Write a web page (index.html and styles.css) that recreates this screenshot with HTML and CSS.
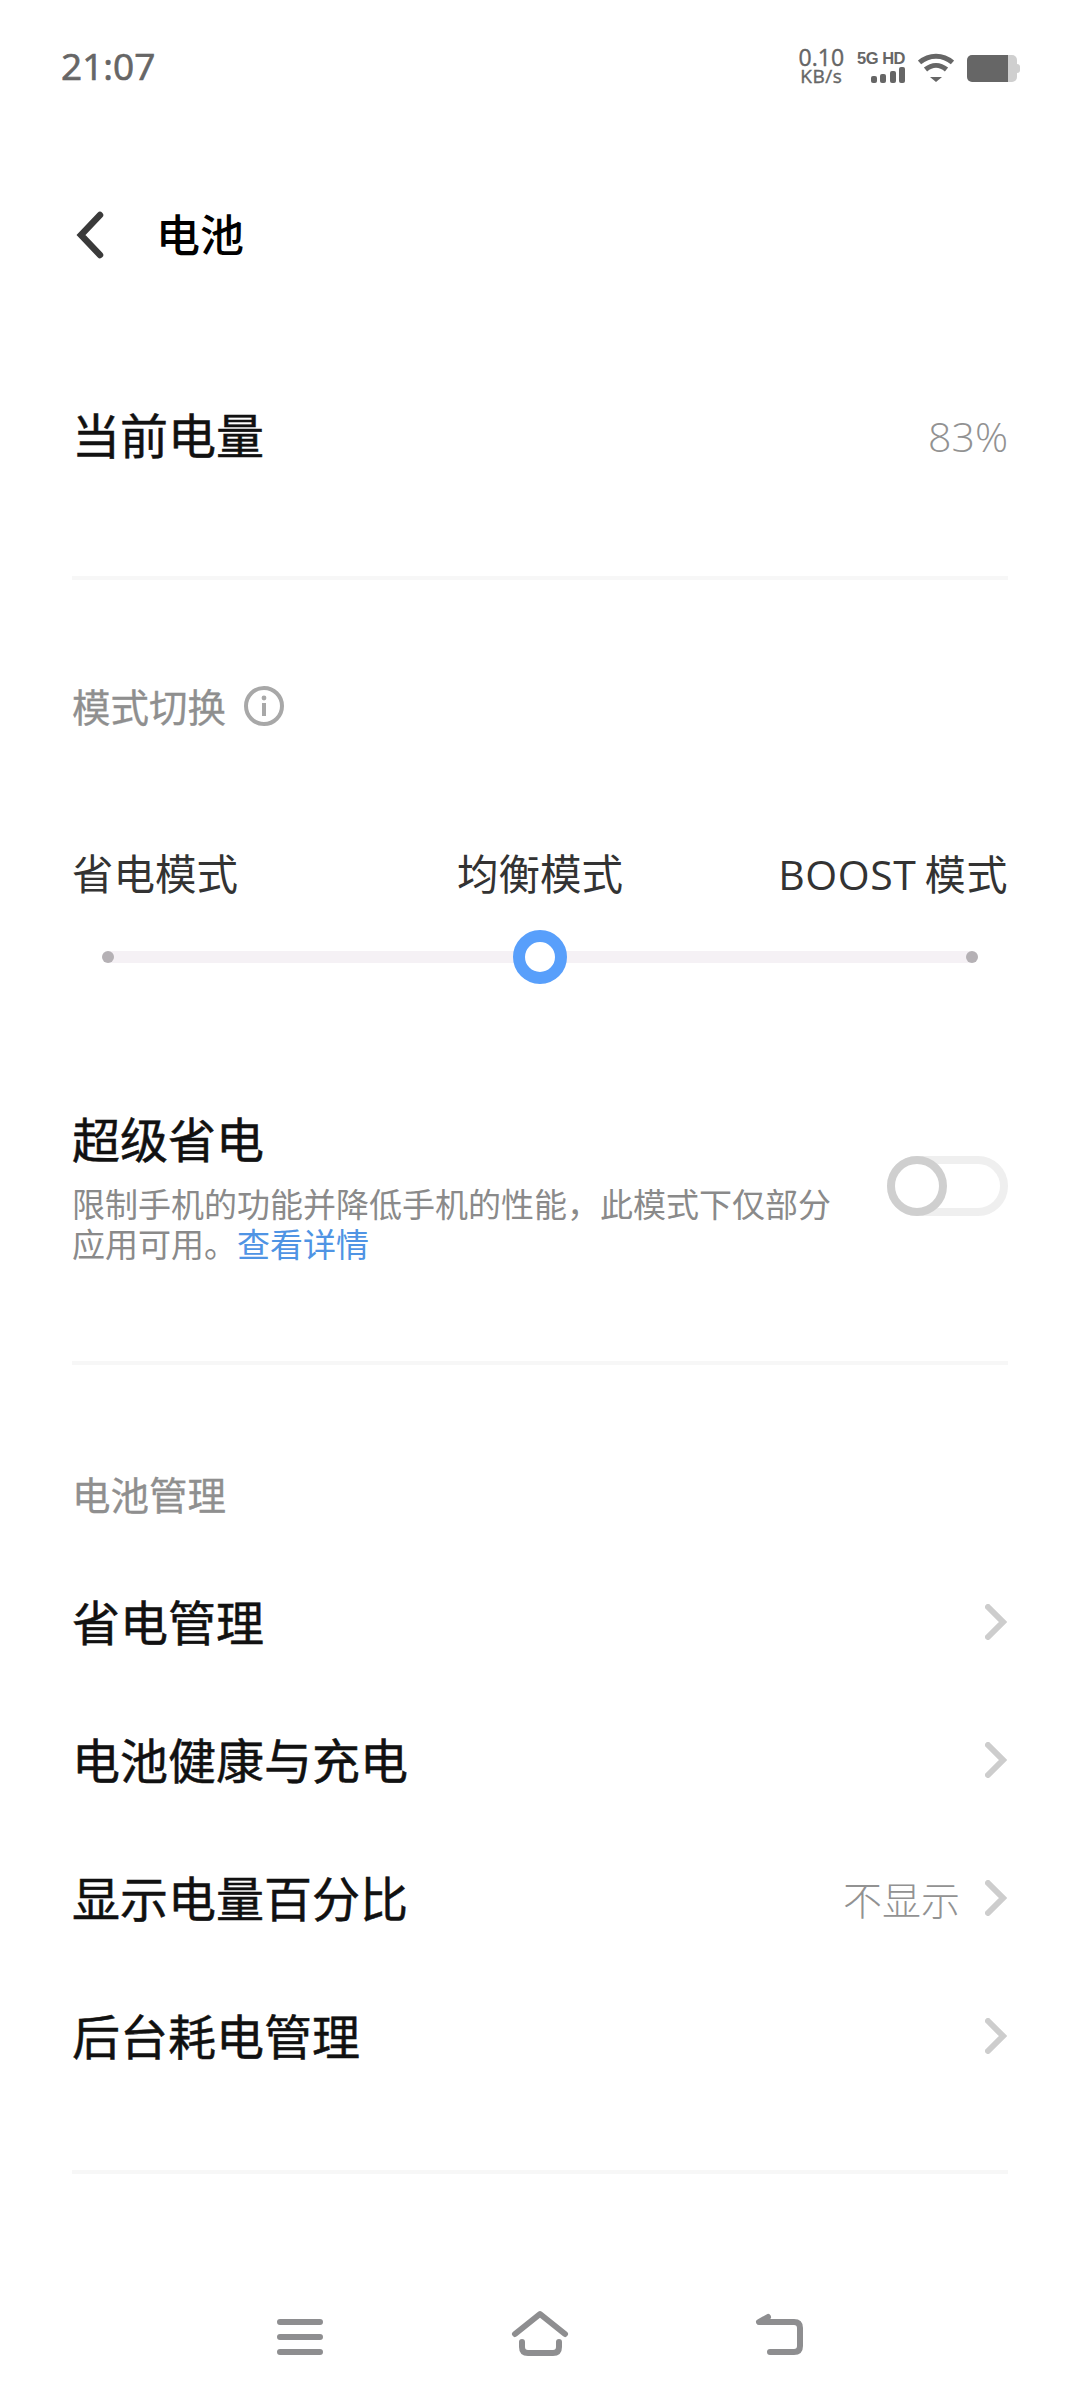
FILE: index.html
```html
<!DOCTYPE html>
<html lang="zh-CN">
<head>
    <meta charset="UTF-8">
    <meta name="viewport" content="width=device-width, initial-scale=1.0">
    <title>电池</title>
    <link rel="stylesheet" href="styles.css">
</head>
<body>
    <div class="status-bar">
        <span class="status-time">21:07</span>
        <div class="status-icons">
            <div class="net-speed">
                <span class="net-value">0.10</span>
                <span class="net-unit">KB/s</span>
            </div>
            <div class="signal">
                <span class="signal-label">5G HD</span>
                <div class="signal-bars">
                    <i class="bar-1"></i><i class="bar-2"></i><i class="bar-3"></i><i class="bar-4"></i>
                </div>
            </div>
            <svg class="wifi-icon" width="36" height="29" viewBox="0 0 36 29">
                <path d="M1.500 9.500C11 1 25 1 34.500 9.500" fill="none" stroke="#666" stroke-width="5"/>
                <path d="M7.500 16.500C14 11 22 11 28.500 16.500" fill="none" stroke="#666" stroke-width="5"/>
                <path d="M12 24H24L18 29Z" fill="#666"/>
            </svg>
            <div class="battery">
                <div class="battery-level"></div>
                <div class="battery-rest"></div>
                <div class="battery-cap"></div>
            </div>
        </div>
    </div>

    <div class="page-header">
        <svg class="back-icon" width="34" height="50" viewBox="0 0 34 50">
            <path d="M27 5L8 25L27 45" fill="none" stroke="#3a3a3a" stroke-width="6.500" stroke-linecap="round" stroke-linejoin="miter"/>
        </svg>
        <h1 class="page-title">电池</h1>
    </div>

    <div class="section section-level">
        <div class="row-level">
            <span class="row-title">当前电量</span>
            <span class="level-value">83%</span>
        </div>
    </div>

    <div class="section section-mode">
        <div class="section-title">
            <span>模式切换</span>
            <svg class="info-icon" width="40" height="40" viewBox="0 0 40 40">
                <circle cx="20" cy="20" r="18" fill="none" stroke="#a8a8a8" stroke-width="4"/>
                <circle cx="20" cy="12" r="2.400" fill="#a8a8a8"/>
                <rect x="18" y="17" width="4" height="13" fill="#a8a8a8"/>
            </svg>
        </div>
        <div class="mode-labels">
            <span>省电模式</span>
            <span>均衡模式</span>
            <span class="mode-boost">BOOST 模式</span>
        </div>
        <div class="mode-slider">
            <div class="slider-track"></div>
            <i class="slider-dot"></i>
            <i class="slider-knob"></i>
            <i class="slider-dot"></i>
        </div>
        <div class="row-super">
            <div class="super-text">
                <div class="row-title">超级省电</div>
                <p class="super-desc">限制手机的功能并降低手机的性能，此模式下仅部分应用可用。<a class="detail-link">查看详情</a></p>
            </div>
            <div class="switch"><i class="switch-knob"></i></div>
        </div>
    </div>

    <div class="section section-manage">
        <div class="section-title"><span>电池管理</span></div>
        <div class="setting-list">
            <div class="setting-row">
                <span class="row-title">省电管理</span>
                <svg class="chevron" width="22" height="36" viewBox="0 0 22 36"><path d="M3 3L18 18L3 33" fill="none" stroke="#cdcdcd" stroke-width="6" stroke-linecap="round"/></svg>
            </div>
            <div class="setting-row">
                <span class="row-title">电池健康与充电</span>
                <svg class="chevron" width="22" height="36" viewBox="0 0 22 36"><path d="M3 3L18 18L3 33" fill="none" stroke="#cdcdcd" stroke-width="6" stroke-linecap="round"/></svg>
            </div>
            <div class="setting-row">
                <span class="row-title">显示电量百分比</span>
                <span class="row-value">不显示</span>
                <svg class="chevron" width="22" height="36" viewBox="0 0 22 36"><path d="M3 3L18 18L3 33" fill="none" stroke="#cdcdcd" stroke-width="6" stroke-linecap="round"/></svg>
            </div>
            <div class="setting-row">
                <span class="row-title">后台耗电管理</span>
                <svg class="chevron" width="22" height="36" viewBox="0 0 22 36"><path d="M3 3L18 18L3 33" fill="none" stroke="#cdcdcd" stroke-width="6" stroke-linecap="round"/></svg>
            </div>
        </div>
    </div>

    <div class="nav-bar">
        <svg width="60" height="60" viewBox="0 0 60 60">
            <path d="M11 15H51M11 30H51M11 45H51" fill="none" stroke="#8e8e90" stroke-width="6" stroke-linecap="round"/>
        </svg>
        <svg width="60" height="60" viewBox="0 0 60 60">
            <path d="M5 27L30 7L55 27" fill="none" stroke="#8e8e90" stroke-width="6" stroke-linecap="round" stroke-linejoin="round"/>
            <path d="M12 35V40Q12 46 18 46H43Q49 46 49 40V35" fill="none" stroke="#8e8e90" stroke-width="6" stroke-linecap="round"/>
        </svg>
        <svg width="60" height="60" viewBox="0 0 60 60">
            <path d="M17 10L8 15H43Q49 15 49 21V39Q49 45 43 45H19" fill="none" stroke="#8e8e90" stroke-width="6" stroke-linecap="round" stroke-linejoin="round"/>
        </svg>
    </div>
</body>
</html>
```

FILE: styles.css
```css
* {
    box-sizing: border-box;
}
html, body {
    margin: 0;
    padding: 0;
}
body {
    width: 1080px;
    height: 2400px;
    overflow: hidden;
    background: #fff;
    color: #111;
    font-family: "Open Sans", "Noto Sans CJK SC", sans-serif;
}

/* status bar */
.status-bar {
    display: flex;
    align-items: center;
    justify-content: space-between;
    height: 132px;
    padding: 0 60px 0 61px;
}
.status-time {
    margin-bottom: 2px;
    font-size: 37px;
    font-weight: 500;
    color: #666;
    -webkit-text-stroke: 0.7px #666;
}
.status-icons {
    display: flex;
    align-items: center;
    gap: 13px;
}
.net-speed {
    display: flex;
    flex-direction: column;
    align-items: center;
    color: #666;
    font-weight: 500;
    -webkit-text-stroke: 0.4px #666;
}
.net-value {
    font-size: 23px;
    line-height: 20px;
}
.net-unit {
    font-size: 19px;
    line-height: 18px;
    letter-spacing: 0.5px;
}
.signal {
    display: flex;
    flex-direction: column;
    align-items: flex-end;
    gap: 1px;
    margin-top: 1px;
}
.signal-label {
    font-family: "Liberation Sans", sans-serif;
    font-size: 16.500px;
    line-height: 16px;
    font-weight: 700;
    color: #666;
    letter-spacing: -0.5px;
}
.signal-bars {
    display: flex;
    align-items: flex-end;
    gap: 3.500px;
}
.signal-bars i {
    display: block;
    width: 6px;
    background: #666;
    border-radius: 2px;
}
.bar-1 { height: 7px; }
.bar-2 { height: 9px; }
.bar-3 { height: 12px; }
.bar-4 { height: 16px; }
.wifi-icon {
    margin-top: 2px;
}
.battery {
    display: flex;
    align-items: center;
    margin-top: 4px;
}
.battery-level {
    width: 41px;
    height: 27px;
    background: #666;
    border-radius: 5px 0 0 5px;
}
.battery-rest {
    width: 9px;
    height: 27px;
    background: #cfcfcf;
    border-radius: 0 5px 5px 0;
}
.battery-cap {
    width: 3px;
    height: 9px;
    background: #cfcfcf;
    border-radius: 0 3px 3px 0;
}

/* header */
.page-header {
    display: flex;
    align-items: center;
    height: 206px;
    padding-left: 73px;
}
.back-icon {
    margin-right: 49px;
}
.page-title {
    margin: 0 0 4px;
    font-size: 44px;
    font-weight: 500;
    color: #000;
}

/* sections */
.section {
    margin: 0 72px;
    border-bottom: 4px solid #f7f7f7;
}
.section-level {
    height: 242px;
}
.section-mode {
    height: 785px;
    padding-top: 96px;
}
.section-manage {
    height: 809px;
    padding-top: 99px;
}
.row-level {
    display: flex;
    align-items: center;
    justify-content: space-between;
    height: 198px;
}
.row-level .row-title {
    padding-bottom: 2px;
}
.row-title {
    font-size: 48px;
    font-weight: 400;
    line-height: 60px;
    color: #111;
    -webkit-text-stroke: 0.5px #111;
}
.level-value {
    margin-bottom: 3px;
    font-size: 41px;
    font-weight: 300;
    color: #929292;
}
.section-title {
    display: flex;
    align-items: center;
    gap: 18px;
    height: 60px;
    font-size: 38.500px;
    font-weight: 400;
    color: #8f8f8f;
    -webkit-text-stroke: 0.3px #8f8f8f;
}
.section-title span {
    margin-bottom: 3px;
}

/* mode slider */
.mode-labels {
    display: grid;
    grid-template-columns: 1fr auto 1fr;
    height: 60px;
    margin-top: 108px;
    font-size: 41.500px;
    line-height: 60px;
    color: #333;
}
.mode-boost {
    text-align: right;
    font-size: 41px;
    letter-spacing: 0.6px;
    word-spacing: -3px;
}
.mode-slider {
    position: relative;
    display: flex;
    align-items: center;
    justify-content: space-between;
    height: 54px;
    margin-top: 26px;
    padding: 0 30px;
}
.slider-track {
    position: absolute;
    left: 36px;
    right: 36px;
    top: 21px;
    height: 12px;
    background: #f5f1f5;
}
.slider-dot {
    position: relative;
    display: block;
    width: 12px;
    height: 12px;
    border-radius: 50%;
    background: #b5b1b5;
}
.slider-knob {
    position: relative;
    display: block;
    width: 54px;
    height: 54px;
    border: 12px solid #589ffb;
    border-radius: 50%;
    background: #fff;
}

/* super saver */
.row-super {
    display: flex;
    align-items: center;
    justify-content: space-between;
    margin-top: 126px;
}
.super-text {
    width: 770px;
}
.super-desc {
    margin: 15px 0 0;
    font-size: 33px;
    line-height: 40px;
    color: #8a8a8a;
}
.detail-link {
    color: #4f94e4;
}
.switch {
    position: relative;
    width: 121px;
    height: 60px;
    margin-bottom: 3px;
    border: 8px solid #efefef;
    border-radius: 30px;
}
.switch-knob {
    position: absolute;
    left: -8px;
    top: -8px;
    width: 60px;
    height: 60px;
    border: 8px solid #cfcfcf;
    border-radius: 50%;
    background: #fff;
}

/* list */
.setting-list {
    margin-top: 29px;
}
.setting-row {
    display: flex;
    align-items: center;
    height: 138px;
}
.setting-row .row-title {
    flex: 1;
    padding-top: 2px;
}
.row-value {
    margin-right: 25px;
    font-size: 39px;
    font-weight: 300;
    color: #929292;
}
.chevron {
    margin-right: 1px;
}

/* nav bar */
.nav-bar {
    display: flex;
    justify-content: center;
    gap: 181px;
    margin-top: 133px;
}
```
